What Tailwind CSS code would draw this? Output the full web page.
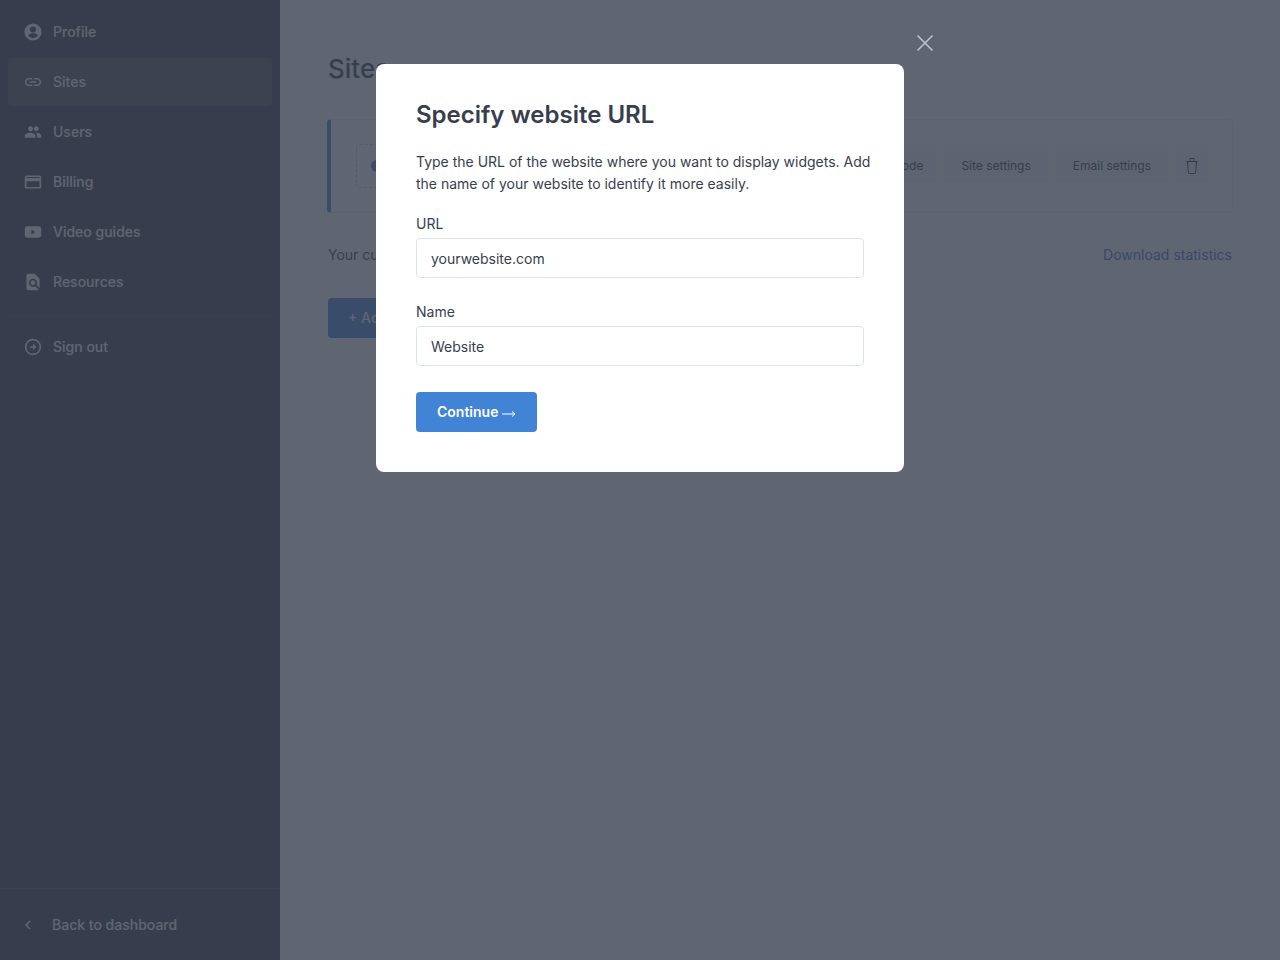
<!DOCTYPE html>
<html lang="en">
<head>
    <meta charset="UTF-8">
    <meta name="viewport" content="width=device-width, initial-scale=1.0">
    <title>Sites</title>
    <script src="https://cdn.jsdelivr.net/npm/@tailwindcss/browser@4"></script>
</head>
<body class="font-['Inter',sans-serif] text-sm text-[#373e4d] bg-white antialiased">

    <div class="flex min-h-screen">

        <!-- Sidebar -->
        <aside class="w-[280px] shrink-0 flex flex-col justify-between bg-[#3b3b4b] text-white font-medium">
            <nav class="px-2 pt-2">
                <ul class="flex flex-col gap-[2px]">
                    <li>
                        <a href="#profile" class="flex items-center gap-[11px] h-12 px-4 rounded">
                            <svg class="size-[18px]" viewBox="1 1 22 22" fill="currentColor"><path d="M12 1.500a10.500 10.500 0 1 0 0 21 10.500 10.500 0 0 0 0-21zm0 3.800a3.700 3.700 0 1 1 0 7.400 3.700 3.700 0 0 1 0-7.400zm0 14.200c-2.500 0-4.700-1.200-6-3.100.1-1.900 4-3 6-3s5.900 1.100 6 3c-1.300 1.900-3.500 3.100-6 3.100z"/></svg>
                            Profile
                        </a>
                    </li>
                    <li>
                        <a href="#sites" class="flex items-center gap-[11px] h-12 px-4 rounded bg-white/10">
                            <svg class="size-[18px]" viewBox="1 1 22 22" fill="currentColor"><path d="M3.900 12c0-1.710 1.390-3.100 3.100-3.100h4V7H7c-2.760 0-5 2.240-5 5s2.240 5 5 5h4v-1.900H7c-1.710 0-3.100-1.390-3.100-3.100zM8 13h8v-2H8v2zm9-6h-4v1.900h4c1.710 0 3.100 1.390 3.100 3.100s-1.390 3.100-3.100 3.100h-4V17h4c2.760 0 5-2.240 5-5s-2.240-5-5-5z"/></svg>
                            Sites
                        </a>
                    </li>
                    <li>
                        <a href="#users" class="flex items-center gap-[11px] h-12 px-4 rounded">
                            <svg class="size-[18px]" viewBox="1 1 22 22" fill="currentColor"><path d="M16 11c1.660 0 2.990-1.340 2.990-3S17.660 5 16 5s-3 1.340-3 3 1.340 3 3 3zm-7 0c1.660 0 2.990-1.340 2.990-3S10.660 5 9 5 6 6.340 6 8s1.340 3 3 3zm-.5 2C6.200 13 2 14.200 2 16.500V19h13v-2.500C15 14.200 10.800 13 8.500 13zm7.500 0l-1 .05c1.200.85 2 2 2 3.450V19h5v-2.500c0-2.300-3.700-3.500-6-3.500z"/></svg>
                            Users
                        </a>
                    </li>
                    <li>
                        <a href="#billing" class="flex items-center gap-[11px] h-12 px-4 rounded">
                            <svg class="size-[18px]" viewBox="1 1 22 22" fill="currentColor"><path d="M20 4H4c-1.110 0-2 .89-2 2v12c0 1.110.89 2 2 2h16c1.110 0 2-.89 2-2V6c0-1.110-.89-2-2-2zm0 14H4v-7h16v7zm0-11H4V6h16v1z"/></svg>
                            Billing
                        </a>
                    </li>
                    <li>
                        <a href="#videos" class="flex items-center gap-[11px] h-12 px-4 rounded">
                            <svg class="size-[18px]" viewBox="1 1 22 22" fill="currentColor"><path fill-rule="evenodd" d="M5 5h14a3 3 0 0 1 3 3v8a3 3 0 0 1-3 3H5a3 3 0 0 1-3-3V8a3 3 0 0 1 3-3zm5 4v6l5-3z"/></svg>
                            Video guides
                        </a>
                    </li>
                    <li>
                        <a href="#resources" class="flex items-center gap-[11px] h-12 px-4 rounded">
                            <svg class="size-[18px]" viewBox="1 1 22 22" fill="currentColor"><path d="M20 19.590V8l-6-6H6c-1.100 0-1.990.9-1.990 2L4 20c0 1.100.89 2 1.990 2H18c.45 0 .85-.15 1.190-.4l-4.430-4.430c-.8.520-1.740.83-2.760.83-2.760 0-5-2.240-5-5s2.240-5 5-5 5 2.240 5 5c0 1.020-.31 1.960-.83 2.750L20 19.590zM9 13c0 1.660 1.340 3 3 3s3-1.340 3-3-1.340-3-3-3-3 1.340-3 3z"/></svg>
                            Resources
                        </a>
                    </li>
                </ul>
                <hr class="my-2 border-white/10">
                <a href="#signout" class="flex items-center gap-[11px] h-12 px-4 rounded">
                    <svg class="size-[18px]" viewBox="1 1 22 22"><circle cx="12" cy="12" r="9" fill="none" stroke="currentColor" stroke-width="2"/><path d="M8 11h4V8l4 4-4 4v-3H8z" fill="currentColor"/></svg>
                    Sign out
                </a>
            </nav>
            <a href="#dashboard" class="flex items-center gap-[18px] h-[72px] px-6 border-t border-white/10">
                <svg class="size-[10px]" viewBox="0 0 10 10" fill="none" stroke="currentColor" stroke-width="1.500"><path d="M6 1L2 5l4 4"/></svg>
                Back to dashboard
            </a>
        </aside>

        <!-- Content -->
        <main class="flex-1 px-12 pt-12">
            <h1 class="text-[26px] leading-[42px] font-medium">Sites</h1>

            <section class="-mx-px mt-[29px] flex items-center justify-between h-[94px] pl-[25px] pr-6 rounded border border-[#edf0fa] border-l-4 border-l-[#4183d5]">
                <div class="flex items-center w-40 h-11 px-[14px] rounded border border-dashed border-[#c5cbe0]">
                    <span class="size-3 rounded-full bg-[#4183d5]"></span>
                </div>
                <div class="flex gap-2 text-xs">
                    <button type="button" class="h-8 px-[13px] rounded bg-[#f3f4fc]">Code</button>
                    <button type="button" class="h-8 px-[17px] rounded bg-[#f3f4fc]">Site settings</button>
                    <button type="button" class="h-8 px-[17px] rounded bg-[#f3f4fc]">Email settings</button>
                    <button type="button" aria-label="Delete site" class="flex items-center justify-center size-8 rounded bg-[#f3f4fc]">
                        <svg class="w-3 h-4" viewBox="0 0 12 16" fill="none" stroke="currentColor"><path d="M0 3.500h12M4 3V.5h4V3M1.500 3.500l1 12h7l1-12"/></svg>
                    </button>
                </div>
            </section>

            <div class="mt-[31px] flex justify-between leading-[22px]">
                <p>Your current plan</p>
                <a href="#statistics" class="text-[#3f6fcf]">Download statistics</a>
            </div>

            <button type="button" class="mt-8 h-10 px-5 rounded bg-[#4183d5] text-white font-medium">+ Add</button>
        </main>
    </div>

    <!-- Modal -->
    <div class="fixed inset-0 flex items-start justify-center pt-16 bg-[#373e4d]/80">
        <div role="dialog" aria-labelledby="dialog-title" class="relative w-full max-w-[528px] p-10 rounded-lg bg-white">
            <button type="button" aria-label="Close" class="absolute -top-[30px] -right-[30px] text-[#c3c5ca]">
                <svg class="size-[18px]" viewBox="0 0 18 18" fill="none" stroke="currentColor" stroke-width="1.500"><path d="M1.500 1.500l15 15M16.500 1.500l-15 15"/></svg>
            </button>
            <h2 id="dialog-title" class="text-2xl leading-[22px] font-semibold">Specify website URL</h2>
            <p class="mt-[25px] -mr-3 leading-[22px]">Type the URL of the website where you want to display widgets. Add the name of your website to identify it more easily.</p>
            <form class="flex flex-col items-start">
                <label for="url" class="mt-[18px] leading-[22px]">URL</label>
                <input id="url" type="text" value="yourwebsite.com" class="mt-[3px] w-full h-10 px-[14px] rounded border border-[#dce3ec]">
                <label for="name" class="mt-[23px] leading-[22px]">Name</label>
                <input id="name" type="text" value="Website" class="mt-[3px] w-full h-10 px-[14px] rounded border border-[#dce3ec]">
                <button type="submit" class="mt-[26px] flex items-center gap-1 h-10 px-[21px] rounded bg-[#4183d5] text-white font-semibold">
                    Continue
                    <svg class="w-[14px] h-2 mt-1" viewBox="0 0 14 8" fill="none" stroke="currentColor"><path d="M0 4h13M10 1.500L13 4l-3 2.500"/></svg>
                </button>
            </form>
        </div>
    </div>

</body>
</html>
